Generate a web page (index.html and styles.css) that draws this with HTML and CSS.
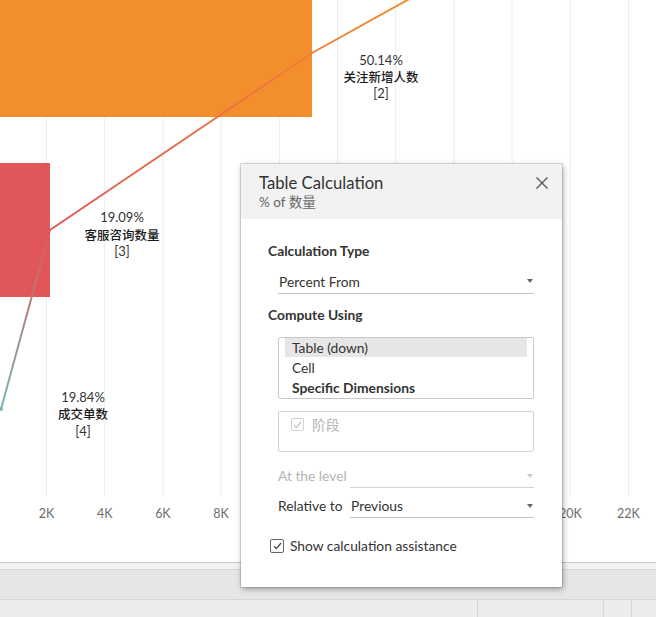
FILE: index.html
```html
<!DOCTYPE html>
<html>
<head>
<meta charset="utf-8">
<link rel="stylesheet" href="styles.css">
</head>
<body>
<div class="page">
  <div class="chart">
    <svg class="viz" width="656" height="562" viewBox="0 0 656 562">
      <defs>
        <linearGradient id="gLow" gradientUnits="userSpaceOnUse" x1="1" y1="409" x2="50" y2="230">
          <stop offset="0" stop-color="#76b7b2"/>
          <stop offset="1" stop-color="#e15759"/>
        </linearGradient>
        <linearGradient id="gHigh" gradientUnits="userSpaceOnUse" x1="50" y1="230" x2="410" y2="0">
          <stop offset="0" stop-color="#e15759"/>
          <stop offset="1" stop-color="#f28e2b"/>
        </linearGradient>
      </defs>
      <g class="grid">
        <line x1="46.5" y1="0" x2="46.5" y2="497"/>
        <line x1="104.7" y1="0" x2="104.7" y2="497"/>
        <line x1="162.9" y1="0" x2="162.9" y2="497"/>
        <line x1="221.1" y1="0" x2="221.1" y2="497"/>
        <line x1="279.3" y1="0" x2="279.3" y2="497"/>
        <line x1="337.5" y1="0" x2="337.5" y2="497"/>
        <line x1="395.7" y1="0" x2="395.7" y2="497"/>
        <line x1="453.9" y1="0" x2="453.9" y2="497"/>
        <line x1="512.1" y1="0" x2="512.1" y2="497"/>
        <line x1="570.3" y1="0" x2="570.3" y2="497"/>
        <line x1="628.5" y1="0" x2="628.5" y2="497"/>
      </g>
      <rect x="0" y="0" width="312" height="117" fill="#f28e2b"/>
      <rect x="0" y="163" width="50" height="134" fill="#e15759"/>
      <polyline points="1,409 50,230" fill="none" stroke="url(#gLow)" stroke-width="2" stroke-linejoin="round"/>
      <polyline points="50,230 312,53 420,-7" fill="none" stroke="url(#gHigh)" stroke-width="2" stroke-linejoin="round"/>
      <circle cx="1" cy="409" r="2" fill="#76b7b2"/>
      <g class="lbl">
        <text x="381" y="64.5" class="pct">50.14%</text>
        <text x="381" y="81.5" class="cn">关注新增人数</text>
        <text x="381" y="98" class="pct">[2]</text>
        <text x="122" y="222" class="pct">19.09%</text>
        <text x="122" y="239.5" class="cn">客服咨询数量</text>
        <text x="122" y="256" class="pct">[3]</text>
        <text x="83" y="402" class="pct">19.84%</text>
        <text x="83" y="419" class="cn">成交单数</text>
        <text x="83" y="435.5" class="pct">[4]</text>
      </g>
      <g class="axis">
        <text x="-11" y="517.5">0K</text>
        <text x="46.5" y="517.5">2K</text>
        <text x="104.7" y="517.5">4K</text>
        <text x="162.9" y="517.5">6K</text>
        <text x="221.1" y="517.5">8K</text>
        <text x="570.3" y="517.5">20K</text>
        <text x="628.5" y="517.5">22K</text>
      </g>
    </svg>
  </div>
  <div class="strip strip-a"></div>
  <div class="strip strip-b"></div>
  <div class="strip strip-c">
    <div class="cell cell-1"></div>
    <div class="cell cell-2"></div>
    <div class="cell cell-3"></div>
    <div class="cell cell-4"></div>
  </div>

  <div class="dialog">
    <div class="dlg-head">
      <div class="dlg-title">Table Calculation</div>
      <div class="dlg-sub">% of 数量</div>
      <svg class="dlg-close" width="12" height="12" viewBox="0 0 12 12">
        <path d="M0.5 0.5 L11.5 11.5 M11.5 0.5 L0.5 11.5" stroke="#555" stroke-width="1.3" fill="none"/>
      </svg>
    </div>
    <div class="dlg-body">
      <div class="sec-title first">Calculation Type</div>
      <div class="select wide">
        <span class="sel-text">Percent From</span>
        <span class="caret"></span>
      </div>
      <div class="sec-title compute">Compute Using</div>
      <div class="listbox">
        <div class="opt selected">Table (down)</div>
        <div class="opt">Cell</div>
        <div class="opt bold">Specific Dimensions</div>
      </div>
      <div class="dimbox">
        <div class="dim-row">
          <span class="cb disabled">
            <svg width="9" height="8" viewBox="0 0 9 8"><path d="M1 4.2 L3.4 6.6 L8 1" stroke="#c4c4c4" stroke-width="1.3" fill="none"/></svg>
          </span>
          <span class="dim-text">阶段</span>
        </div>
      </div>
      <div class="field-row level">
        <span class="field-label muted">At the level</span>
        <div class="select narrow muted-sel">
          <span class="sel-text"></span>
          <span class="caret light"></span>
        </div>
      </div>
      <div class="field-row relative">
        <span class="field-label">Relative to</span>
        <div class="select narrow">
          <span class="sel-text">Previous</span>
          <span class="caret"></span>
        </div>
      </div>
      <div class="assist">
        <span class="cb">
          <svg width="9" height="8" viewBox="0 0 9 8"><path d="M1 4.2 L3.4 6.6 L8 1" stroke="#444" stroke-width="1.3" fill="none"/></svg>
        </span>
        <span class="assist-text">Show calculation assistance</span>
      </div>
    </div>
  </div>
</div>
</body>
</html>
```

FILE: styles.css
```css
* { box-sizing: border-box; }
html, body { margin: 0; padding: 0; background: #fff; }
body {
  font-family: "Lato", "Noto Sans CJK SC", sans-serif;
  color: #333;
}
.page {
  position: relative;
  width: 656px;
  height: 617px;
  overflow: hidden;
}
.chart {
  height: 563px;
  border-bottom: 1px solid #c6c6c6;
  overflow: hidden;
}
.viz { display: block; }
.grid line { stroke: #ededed; stroke-width: 1; }
.lbl text {
  font-family: "Lato", "Noto Sans CJK SC", sans-serif;
  font-size: 13px;
  text-anchor: middle;
  fill: #333;
}
.lbl .cn { fill: #1a1a1a; font-size: 12.5px; font-weight: 500; }
.axis text {
  font-family: "Lato", sans-serif;
  font-size: 12.5px;
  text-anchor: middle;
  fill: #6e6e6e;
}
.strip-a {
  height: 7px;
  background: #f2f2f2;
  border-bottom: 1px solid #d6d6d6;
}
.strip-b {
  height: 30px;
  background: #e6e6e6;
  border-bottom: 1px solid #d6d6d6;
}
.strip-c {
  height: 17px;
  background: #ececec;
  display: flex;
}
.cell { height: 100%; }
.cell-1 { width: 477px; }
.cell-2 { width: 126px; border-left: 1px solid #d6d6d6; }
.cell-3 { width: 28px; border-left: 1px solid #d6d6d6; }
.cell-4 { flex: 1; border-left: 1px solid #d6d6d6; }

.dialog {
  position: absolute;
  left: 241px;
  top: 164px;
  width: 321px;
  height: 423px;
  background: #fff;
  box-shadow: 0 0 0 1px rgba(0,0,0,0.12), 1px 2px 6px rgba(0,0,0,0.35);
}
.dlg-head {
  position: relative;
  height: 55px;
  background: #f2f2f2;
  padding: 9px 0 0 18px;
}
.dlg-title {
  font-size: 16.7px;
  line-height: 20px;
  color: #333;
}
.dlg-sub {
  font-size: 13.5px;
  line-height: 18px;
  color: #666;
}
.dlg-close {
  position: absolute;
  right: 14px;
  top: 13px;
}
.dlg-body {
  padding: 0 28px 0 27px;
  font-size: 13.8px;
}
.sec-title {
  font-weight: 700;
  line-height: 16px;
  color: #333;
}
.sec-title.first { margin-top: 24px; }
.sec-title.compute { margin-top: 13px; }
.select {
  display: flex;
  align-items: center;
  height: 24px;
  border-bottom: 1px solid #c4c4c4;
  padding: 0 1px 0 1px;
  color: #333;
}
.select.wide { margin: 10px 0 0 10px; height: 25px; }
.sel-text { flex: 1; line-height: 23px; }
.caret {
  width: 0; height: 0;
  border-left: 3px solid transparent;
  border-right: 3px solid transparent;
  border-top: 4px solid #666;
  margin-right: 0;
}
.caret.light { border-top-color: #c8c8c8; }
.listbox {
  margin: 14px 0 0 10px;
  height: 62px;
  border: 1px solid #c8c8c8;
  border-radius: 2px;
  padding: 0 6px;
}
.opt {
  height: 20px;
  line-height: 20px;
  padding-left: 7px;
  color: #333;
}
.opt.selected { background: #e6e6e6; height: 19px; line-height: 19px; margin-bottom: 1px; }
.opt.bold { font-weight: 700; }
.dimbox {
  margin: 12px 0 0 10px;
  height: 41px;
  border: 1px solid #d2d2d2;
  border-radius: 2px;
  padding: 6px 0 0 12px;
}
.dim-row { display: flex; align-items: center; height: 13px; }
.cb {
  width: 14px;
  height: 14px;
  border: 1px solid #666;
  border-radius: 2px;
  display: flex;
  align-items: center;
  justify-content: center;
  background: #fff;
}
.cb.disabled { border-color: #d0d0d0; width: 13px; height: 13px; }
.dim-text { margin-left: 8px; color: #b4b4b4; line-height: 13px; }
.field-row {
  display: flex;
  align-items: flex-start;
  margin-left: 10px;
}
.field-row.level { margin-top: 12px; }
.field-row.relative { margin-top: 6px; }
.field-label {
  width: 72px;
  line-height: 23px;
  white-space: nowrap;
  color: #333;
}
.field-label.muted { color: #b4b4b4; }
.select.narrow { flex: 1; }
.select.muted-sel { border-bottom-color: #d4d4d4; }
.assist {
  display: flex;
  align-items: center;
  margin: 20px 0 0 2px;
}
.assist-text { margin-left: 6px; line-height: 16px; color: #333; }
```
